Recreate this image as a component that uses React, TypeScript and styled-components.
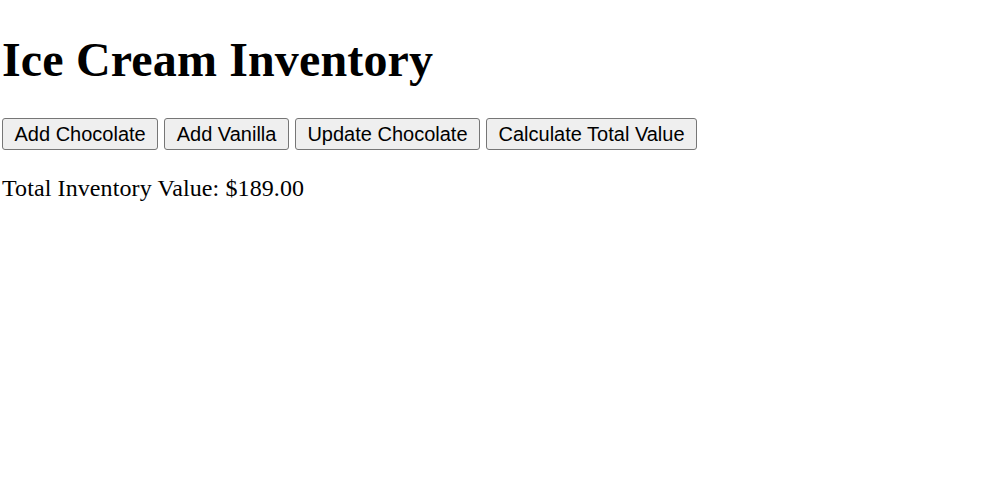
import React from 'react';
import styled, { createGlobalStyle } from 'styled-components';

const GlobalStyle = createGlobalStyle`
  body {
    margin: 0;
    background: #ffffff;
    font-family: "Liberation Serif", "Times New Roman", serif;
    color: #000000;
  }
`;

const Page = styled.div`
  padding: 0 2px;
`;

const Title = styled.h1`
  font-size: 48px;
  font-weight: bold;
  letter-spacing: 0.15px;
  margin: 32px 0 31px;
`;

const ButtonRow = styled.div`
  display: flex;
  gap: 6px;
`;

const ActionButton = styled.button`
  height: 32px;
  padding: 0 11.5px;
  font-family: "Liberation Sans", Arial, sans-serif;
  font-size: 20px;
  color: #000000;
  background: #efefef;
  border: 1px solid #767676;
  border-radius: 3px;
`;

const TotalText = styled.p`
  font-size: 24px;
  letter-spacing: 0.1px;
  margin: 25px 0 24px;
`;

const actions = ['Add Chocolate', 'Add Vanilla', 'Update Chocolate', 'Calculate Total Value'];

const App = () => {
  return (
    <Page>
      <GlobalStyle />
      <Title>Ice Cream Inventory</Title>
      <ButtonRow>
        {actions.map((label) => (
          <ActionButton key={label}>{label}</ActionButton>
        ))}
      </ButtonRow>
      <TotalText>Total Inventory Value: $189.00</TotalText>
    </Page>
  );
};

export default App;
